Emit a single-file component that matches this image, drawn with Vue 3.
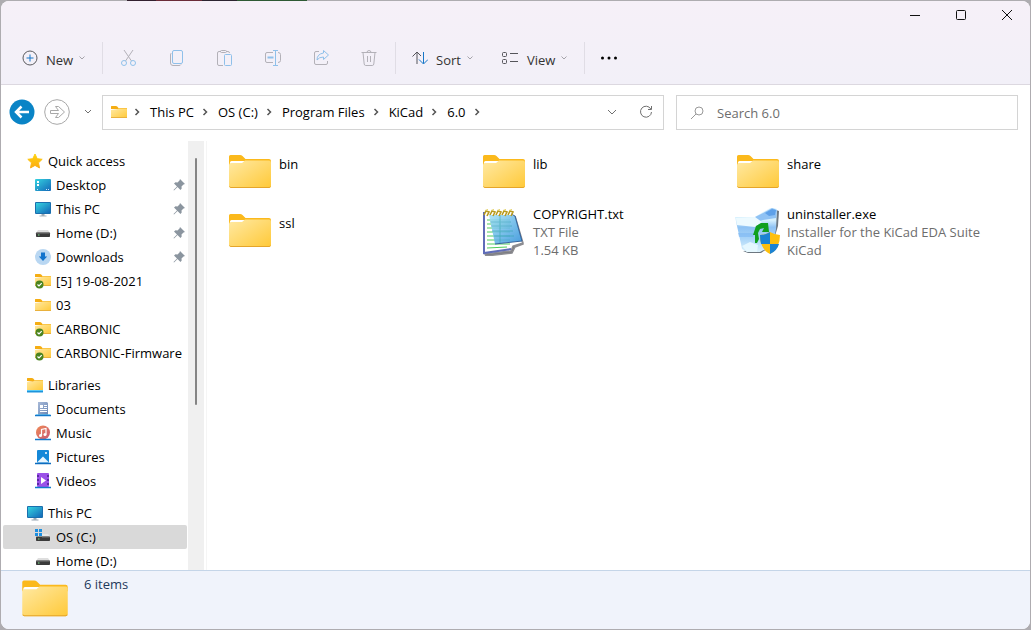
<script setup>
import { ref } from 'vue'

const query = ref('')

const fileActions = [
  { id: 'cut', label: 'Cut' },
  { id: 'copy', label: 'Copy' },
  { id: 'paste', label: 'Paste' },
  { id: 'rename', label: 'Rename' },
  { id: 'share', label: 'Share' },
  { id: 'delete', label: 'Delete' },
]

const crumbs = ['This PC', 'OS (C:)', 'Program Files', 'KiCad', '6.0']

const tree = [
  {
    label: 'Quick access',
    icon: 'star',
    children: [
      { label: 'Desktop', icon: 'desktop', pinned: true },
      { label: 'This PC', icon: 'monitor', pinned: true },
      { label: 'Home (D:)', icon: 'drive', pinned: true },
      { label: 'Downloads', icon: 'downloads', pinned: true },
      { label: '[5] 19-08-2021', icon: 'folder-synced' },
      { label: '03', icon: 'folder-small' },
      { label: 'CARBONIC', icon: 'folder-synced' },
      { label: 'CARBONIC-Firmware', icon: 'folder-synced' },
    ],
  },
  {
    label: 'Libraries',
    icon: 'libraries',
    children: [
      { label: 'Documents', icon: 'documents' },
      { label: 'Music', icon: 'music' },
      { label: 'Pictures', icon: 'pictures' },
      { label: 'Videos', icon: 'videos' },
    ],
  },
  {
    label: 'This PC',
    icon: 'monitor',
    children: [
      { label: 'OS (C:)', icon: 'os-drive', selected: true },
      { label: 'Home (D:)', icon: 'drive' },
    ],
  },
]

const items = [
  { name: 'bin', icon: 'folder', details: [] },
  { name: 'lib', icon: 'folder', details: [] },
  { name: 'share', icon: 'folder', details: [] },
  { name: 'ssl', icon: 'folder', details: [] },
  { name: 'COPYRIGHT.txt', icon: 'notepad', details: ['TXT File', '1.54 KB'] },
  { name: 'uninstaller.exe', icon: 'uninstaller', details: ['Installer for the KiCad EDA Suite', 'KiCad'] },
]
</script>

<template>
  <svg class="sprite" aria-hidden="true">
    <defs>
      <linearGradient id="g-folder" x1="0" y1="0" x2="1" y2="1">
        <stop offset="0" stop-color="#ffe9a3" />
        <stop offset="1" stop-color="#ffc938" />
      </linearGradient>
      <linearGradient id="g-screen" x1="0" y1="0" x2="1" y2="1">
        <stop offset="0" stop-color="#35d3e0" />
        <stop offset="1" stop-color="#1468b8" />
      </linearGradient>
      <linearGradient id="g-star" x1="0" y1="0" x2="0" y2="1">
        <stop offset="0" stop-color="#ffd30f" />
        <stop offset="1" stop-color="#fbab12" />
      </linearGradient>
      <linearGradient id="g-music" x1="0" y1="0" x2="1" y2="1">
        <stop offset="0" stop-color="#f08a55" />
        <stop offset="1" stop-color="#c75a78" />
      </linearGradient>
      <linearGradient id="g-doc" x1="0" y1="0" x2="1" y2="1">
        <stop offset="0" stop-color="#a9bbd9" />
        <stop offset="1" stop-color="#6a86b4" />
      </linearGradient>
      <linearGradient id="g-page" x1="0" y1="0" x2="1" y2="1">
        <stop offset="0" stop-color="#a6e2f8" />
        <stop offset="1" stop-color="#2f8fd8" />
      </linearGradient>
      <linearGradient id="g-bin" x1="0" y1="0" x2="0" y2="1">
        <stop offset="0" stop-color="#e4f6ff" />
        <stop offset="0.3" stop-color="#d4effd" />
        <stop offset="0.45" stop-color="#8ec2f4" />
        <stop offset="0.7" stop-color="#a9d4f8" />
        <stop offset="1" stop-color="#dcf2fc" />
      </linearGradient>
    </defs>

    <symbol id="folder" viewBox="0 1 48 48">
      <path d="M3 17V8.500q0-1.500 1.500-1.500H14q1.500 0 2.500 1l3 3H43q2 0 2 2v4z" fill="#fbb91c" />
      <path d="M4 16v-1.500q0-1.500 1.500-1.500H20l-3 3z" fill="#fff" />
      <path d="M3 17q0-2 2-2h11l3-2.500h24q2 0 2 2V38q0 2-2 2H5q-2 0-2-2z" fill="url(#g-folder)" />
      <path d="M3.500 38.500q.500 1 1.500 1h38q1 0 1.500-1" fill="none" stroke="#e5a52a" />
    </symbol>
    <symbol id="folder-small" viewBox="0 0 16 16">
      <path d="M0 5V2.500Q0 2 .500 2H5q.700 0 1.200.500L7.500 4H15.500q.500 0 .500.500V6z" fill="#f5ad12" />
      <path d="M0 6h5.500L7.500 4.500H15.500q.500 0 .500.500v8.500q0 .500-.500.500H.500q-.500 0-.500-.500z" fill="url(#g-folder)" />
      <path d="M0 13.500h16" stroke="#e9b13d" />
    </symbol>
    <symbol id="folder-synced" viewBox="0 0 16 16">
      <use href="#folder-small" y="-1" width="16" height="16" />
      <circle cx="4.500" cy="11.500" r="4" fill="#4b8420" />
      <path d="M2.500 11.500l1.500 1.500 2.700-2.800" fill="none" stroke="#fff" stroke-width="1.200" />
    </symbol>
    <symbol id="libraries" viewBox="0 0 16 16">
      <path d="M0 4V1.500Q0 1 .500 1H5q.700 0 1.200.500L7.500 3H15.500q.500 0 .500.500V6z" fill="#f5ad12" />
      <path d="M0 5h5.500L7.500 3.500H15.500q.500 0 .500.500v9H0z" fill="url(#g-folder)" />
      <path d="M0 13h16v2q0 .500-.500.500H.500Q0 15.500 0 15z" fill="#1c94dc" />
      <path d="M0 13.500h16" stroke="#59c8f5" />
    </symbol>
    <symbol id="star" viewBox="0 0 16 16">
      <path d="M8 1l2.200 4.700 5 .600-3.700 3.500 1 5.100L8 12.400l-4.500 2.500 1-5.100L.800 6.300l5-.600z" fill="url(#g-star)" stroke="url(#g-star)" stroke-linejoin="round" />
    </symbol>
    <symbol id="desktop" viewBox="0 0 16 16">
      <rect y="2" width="16" height="12" rx="1" fill="url(#g-screen)" />
      <path d="M2 4h2v2H2zM2 7h2v2H2z" fill="#fff" />
      <path d="M2 12.500h1M11 12.500h1M13 12.500h1" stroke="#c9e6fb" />
    </symbol>
    <symbol id="monitor" viewBox="0 0 16 16">
      <path d="M6.500 13h3v2h-3z" fill="#9aa7b2" />
      <path d="M4.500 15h7" stroke="#aab5be" stroke-width="1.200" />
      <rect y="1" width="16" height="12" rx="1" fill="#1a6fae" />
      <rect x="1" y="2" width="14" height="10" fill="url(#g-screen)" />
    </symbol>
    <symbol id="drive" viewBox="0 0 16 16">
      <path d="M3 5h10l2 3H1z" fill="#dedede" />
      <rect x="1" y="7.500" width="14" height="4.500" rx=".800" fill="#3a3a3a" />
      <path d="M1.500 8h13" stroke="#777" />
      <path d="M3 10h1.500" stroke="#7be38a" />
    </symbol>
    <symbol id="os-drive" viewBox="0 0 16 16">
      <path d="M5 5h8l2 3H1l1-2z" fill="#e8e8e8" />
      <rect x="1" y="7.500" width="14" height="4.500" rx=".800" fill="#3a3a3a" />
      <path d="M7 8h7.500" stroke="#777" />
      <path d="M3 10h1.500" stroke="#7be38a" />
      <path d="M0 0h3v3H0zM4 0h3v3H4zM0 4h3v3H0zM4 4h3v3H4z" fill="#1c8fe0" />
    </symbol>
    <symbol id="downloads" viewBox="0 0 16 16">
      <circle cx="8" cy="8" r="8" fill="#b9d7f2" />
      <path d="M6 3.500h4v4h2.200L8 12 3.800 7.500H6z" fill="#1273cc" />
    </symbol>
    <symbol id="documents" viewBox="0 0 16 16">
      <path d="M3 1h9l1 1v12H3z" fill="url(#g-doc)" />
      <path d="M5 4h3v3H5zM9 4h3v1H9zM9 6h3v1H9zM5 8h7v1H5zM5 10h7v1H5z" fill="#fff" />
      <path d="M0 14.500h16" stroke="#1378cc" stroke-width="1.500" />
      <path d="M1 13.500h14" stroke="#52bdf0" stroke-width=".600" />
    </symbol>
    <symbol id="music" viewBox="0 0 16 16">
      <circle cx="8" cy="7.500" r="7" fill="url(#g-music)" />
      <path d="M6.500 10.500V4.500L11 3.500v6" fill="none" stroke="#fff" stroke-width="1.200" />
      <circle cx="5.500" cy="10.500" r="1.500" fill="#fff" />
      <circle cx="10" cy="9.500" r="1.500" fill="#fff" />
      <path d="M0 14.500h16" stroke="#1378cc" stroke-width="1.500" />
    </symbol>
    <symbol id="pictures" viewBox="0 0 16 16">
      <rect x="2" y="1" width="12" height="13" rx="1" fill="#1588d8" />
      <path d="M2 13.500l6-6 6 6z" fill="#e9f6ff" />
      <circle cx="11" cy="4" r="1" fill="#fff" />
      <path d="M0 14.500h16" stroke="#0c6cbf" stroke-width="1.500" />
    </symbol>
    <symbol id="videos" viewBox="0 0 16 16">
      <rect x="2" y="0" width="12" height="14" rx="1" fill="#9b51e8" />
      <path d="M3 2v11M13 2v11" stroke="#4a1b8f" stroke-width="1.500" stroke-dasharray="2 2" />
      <path d="M6 4l5 3.500L6 11z" fill="#fff" />
      <path d="M0 14.500h16" stroke="#1378cc" stroke-width="1.500" />
    </symbol>
    <symbol id="pin" viewBox="0 0 12 12">
      <path d="M7 0l5 5-1.500.500-2 2 .200 2L7.500 11 4.500 8 1 11.500.500 11 4 7.500 1 4.500 2.500 3.300l2 .200 2-2z" fill="#8b959f" />
    </symbol>
    <symbol id="notepad" viewBox="0 0 48 48">
      <path d="M5 46l26-3 2-5 10-3-8-27 8 28-8 3-3 6-26 3z" fill="#77777c" stroke="#8d8d92" stroke-width="1.500" />
      <path d="M4 4h27v37L5 45z" fill="#fff" />
      <path d="M7 12h23M7 16h23M7 20h23M7 24h23M7 28h23M7 32h23M7 36h23M7 40l20-1" stroke="#4fce5c" stroke-width="1.200" />
      <path d="M4 4v41l27-4" fill="none" stroke="#5f6cb8" stroke-width="2" />
      <path d="M9 7h22l4 1 7 25-27 3z" fill="url(#g-page)" opacity=".88" />
      <path d="M31 6l4 2 7 25-27 3" fill="none" stroke="#36649e" stroke-width="1" />
      <path d="M10 14h21M11 18h21M12 23h21M14 28h20M20 7v28" stroke="#1f9c9c" opacity=".45" />
      <path d="M4 7l2-4 3 1-2 4M10 7l2-4 3 1-2 4M16 7l2-4 3 1-2 4M22 7l2-4 3 1-2 4M28 7l2-4 3 1-2 4" fill="none" stroke="#b99b22" stroke-width="1.600" />
      <path d="M5 2.500l3-1M11 2.500l3-1M17 2.500l3-1M23 2.500l3-1M29 2.500l3-1" stroke="#e2cf62" />
    </symbol>
    <symbol id="uninstaller" viewBox="0 0 48 48">
      <path d="M42 2l3 1-1 15-3 10-4-4z" fill="#6d7780" />
      <path d="M9 43l5 2h13l6-4z" fill="#6d7780" />
      <path d="M1 9l20 0 8-5 9-5 5 2-1 20-3 16-13 7H13l-5-3-1-5z" fill="url(#g-bin)" />
      <path d="M21 9l8-4 9-5 5 2-1 8-13 2-6 2z" fill="#8fc2f4" />
      <path d="M31 5l7-4 4 1-1 5-6 1z" fill="#5ea0e8" />
      <path d="M2 10l19-1 7 5-7 5-18-2z" fill="#edfaff" />
      <path d="M4 25h16l-1 4H5z" fill="#7db8f4" opacity=".6" />
      <path d="M8 38l8-4 8 3-1 7H13z" fill="#e8f8ff" opacity=".9" />
      <path d="M21 35v-8h-2l3-9 5-3 7 0 1 9-7 0 2-4-4 1-2 4 1 6-2 4z" fill="#10a01f" />
      <path d="M36 24q5 3 10 3 0 14-10 19-10-5-10-19 5 0 10-3z" fill="#fdbf0e" />
      <path d="M36 24v12H27q-1-4-1-9 5 0 10-3z" fill="#1b83d4" />
      <path d="M36 36h9q-2 7-9 10z" fill="#1b83d4" />
    </symbol>
    <symbol id="cut" viewBox="0 0 18 18">
      <path d="M4 1l7.500 11M13 1L5.500 12" stroke="#b3b1b8" />
      <circle cx="4" cy="14" r="2.500" fill="none" stroke="#8fc0ea" />
      <circle cx="13" cy="14" r="2.500" fill="none" stroke="#8fc0ea" />
    </symbol>
    <symbol id="copy" viewBox="0 0 18 18">
      <path d="M3.500 4Q2.500 4.500 2.500 6v8q0 2.500 2.500 2.500h6q1.500 0 2-1" fill="none" stroke="#b3b1b8" />
      <rect x="4.500" y="1.500" width="10" height="13" rx="1.500" fill="none" stroke="#8fc0ea" />
    </symbol>
    <symbol id="paste" viewBox="0 0 18 18">
      <path d="M5 2.500H3Q1.500 2.500 1.500 4v11q0 1.500 1.500 1.500h4M10 2.500h2q1.500 0 1.500 1.500" fill="none" stroke="#b3b1b8" />
      <rect x="4.500" y="1.500" width="6" height="2" rx="1" fill="none" stroke="#b3b1b8" />
      <rect x="8.500" y="5.500" width="7" height="11" rx="1" fill="none" stroke="#8fc0ea" />
    </symbol>
    <symbol id="rename" viewBox="0 0 18 18">
      <path d="M9 3.500H3Q1.500 3.500 1.500 5v7q0 1.500 1.500 1.500h6M14 3.500q2.500 0 2.500 2v6q0 2-2.500 2" fill="none" stroke="#b3b1b8" />
      <path d="M9 1.500h5M11.500 1.500v15M9 16.500h5" fill="none" stroke="#8fc0ea" />
      <path d="M3.500 8.500h6" stroke="#8fc0ea" stroke-width="2" />
    </symbol>
    <symbol id="share" viewBox="0 0 18 18">
      <path d="M7 2.500H4Q2.500 2.500 2.500 4v10q0 1.500 1.500 1.500h10q1.500 0 1.500-1.500v-2" fill="none" stroke="#b3b1b8" />
      <path d="M11.500 1.500l5 4.500-5 4.500V8Q7 8 5 11q0-6 6.500-7z" fill="none" stroke="#8fc0ea" stroke-linejoin="round" />
    </symbol>
    <symbol id="delete" viewBox="0 0 18 18">
      <path d="M1.500 3.500h15M7 3.500q0-2 2-2t2 2M3 3.500l1.200 11.500q.200 1.500 1.500 1.500h6.600q1.300 0 1.500-1.500L15 3.500M7.500 7v6M10.500 7v6" fill="none" stroke="#b3b1b8" />
    </symbol>
  </svg>

  <div class="backdrop">
    <div class="window">
      <header class="chrome">
        <div class="caption">
          <button type="button" aria-label="Minimize">
            <svg width="12" height="12" viewBox="0 0 12 12"><path d="M1 6.500h10" /></svg>
          </button>
          <button type="button" aria-label="Maximize">
            <svg width="12" height="12" viewBox="0 0 12 12"><rect x="1.500" y="1.500" width="9" height="9" rx="1" /></svg>
          </button>
          <button type="button" aria-label="Close">
            <svg width="12" height="12" viewBox="0 0 12 12"><path d="M1 1l10 10M11 1L1 11" /></svg>
          </button>
        </div>

        <div class="toolbar" role="toolbar" aria-label="Commands">
          <button type="button" class="command new">
            <svg width="16" height="16" viewBox="0 0 16 16" fill="none">
              <circle cx="8" cy="8" r="7" stroke="#5a5a5e" />
              <path d="M8 4.500v7M4.500 8h7" stroke="#1676c8" />
            </svg>
            <span>New</span>
            <svg class="caret" width="6" height="4" viewBox="0 0 6 4"><path d="M.500.500L3 3 5.500.500" /></svg>
          </button>
          <span class="rule"></span>
          <div class="actions">
            <button v-for="a in fileActions" :key="a.id" type="button" disabled :aria-label="a.label">
              <svg width="18" height="18"><use :href="'#' + a.id" /></svg>
            </button>
          </div>
          <span class="rule"></span>
          <button type="button" class="command sort">
            <svg width="16" height="14" viewBox="0 0 16 14" fill="none">
              <path d="M5 13V1.500M.500 5.500L5 1l4 4" stroke="#55555a" />
              <path d="M11.500 1v11.500M7 8.500l4.500 4.500L16 8.500" stroke="#1676c8" />
            </svg>
            <span>Sort</span>
            <svg class="caret" width="6" height="4" viewBox="0 0 6 4"><path d="M.500.500L3 3 5.500.500" /></svg>
          </button>
          <button type="button" class="command view">
            <svg width="18" height="14" viewBox="0 0 18 14" fill="none" stroke="#55555a">
              <rect x="1.500" y="1.500" width="4" height="4" rx="1" />
              <rect x="1.500" y="8.500" width="4" height="4" rx="1" />
              <path d="M9 2.500h8M9 10.500h8" />
            </svg>
            <span>View</span>
            <svg class="caret" width="6" height="4" viewBox="0 0 6 4"><path d="M.500.500L3 3 5.500.500" /></svg>
          </button>
          <span class="rule"></span>
          <button type="button" class="more" aria-label="See more">
            <svg width="18" height="4" viewBox="0 0 18 4"><circle cx="2.500" cy="2" r="1.500" /><circle cx="9" cy="2" r="1.500" /><circle cx="15.500" cy="2" r="1.500" /></svg>
          </button>
        </div>
      </header>

      <div class="navbar">
        <button type="button" class="round" aria-label="Back">
          <svg width="26" height="26" viewBox="0 0 26 26" fill="none">
            <circle cx="13" cy="13" r="12.500" fill="#0a84c6" />
            <path d="M20 13H8M12.500 7.500L7 13l5.500 5.500" stroke="#fff" stroke-width="2.500" />
          </svg>
        </button>
        <button type="button" class="round" aria-label="Forward" disabled>
          <svg width="26" height="26" viewBox="0 0 26 26" fill="none" stroke="#a8a8a8">
            <circle cx="13" cy="13" r="12.300" />
            <path d="M6.500 11.500h8l-3-4h3l6 5.500-6 5.500h-3l3-4h-8z" />
          </svg>
        </button>
        <button type="button" class="recent" aria-label="Recent locations">
          <svg width="8" height="6" viewBox="0 0 8 6"><path d="M1 1l3 3 3-3" /></svg>
        </button>

        <nav class="address" aria-label="Address">
          <svg width="16" height="16"><use href="#folder-small" /></svg>
          <ol>
            <li class="sep"><svg width="6" height="8" viewBox="0 0 6 8"><path d="M1.500 1l3 3-3 3" /></svg></li>
            <li v-for="c in crumbs" :key="c">
              <a href="#">{{ c }}</a>
              <svg width="6" height="8" viewBox="0 0 6 8"><path d="M1.500 1l3 3-3 3" /></svg>
            </li>
          </ol>
          <button type="button" aria-label="Previous locations">
            <svg width="10" height="6" viewBox="0 0 10 6"><path d="M1 1l4 4 4-4" /></svg>
          </button>
          <button type="button" aria-label="Refresh">
            <svg width="14" height="14" viewBox="0 0 14 14"><path d="M11.800 4A5.500 5.500 0 1 0 12.500 7M12.500 1v3.500H9" /></svg>
          </button>
        </nav>

        <label class="search">
          <svg width="14" height="14" viewBox="0 0 14 14"><circle cx="9" cy="5" r="4" /><path d="M6 8L1 13" /></svg>
          <input v-model="query" type="text" aria-label="Search 6.0" placeholder="Search 6.0" />
        </label>
      </div>

      <div class="body">
        <nav class="tree" aria-label="Folders">
          <ul v-for="group in tree" :key="group.label">
            <li>
              <a href="#" class="node root">
                <svg width="16" height="16"><use :href="'#' + group.icon" /></svg>
                <span>{{ group.label }}</span>
              </a>
            </li>
            <li v-for="n in group.children" :key="n.label">
              <a href="#" class="node" :class="{ selected: n.selected }">
                <svg width="16" height="16"><use :href="'#' + n.icon" /></svg>
                <span>{{ n.label }}</span>
                <svg v-if="n.pinned" class="pin" width="12" height="12"><use href="#pin" /></svg>
              </a>
            </li>
          </ul>
        </nav>
        <div class="scrollbar"><div class="thumb"></div></div>
        <main class="files">
          <a v-for="f in items" :key="f.name" href="#" class="file" :class="{ plain: !f.details.length }">
            <svg width="48" height="48"><use :href="'#' + f.icon" /></svg>
            <span class="text">
              <span class="name">{{ f.name }}</span>
              <span v-for="d in f.details" :key="d" class="detail">{{ d }}</span>
            </span>
          </a>
        </main>
      </div>

      <footer class="status">
        <svg width="52" height="52" viewBox="0 0 48 48"><use href="#folder" /></svg>
        <span>{{ items.length }} items</span>
      </footer>
    </div>
  </div>
</template>

<style>
body {
  margin: 0;
}
</style>

<style scoped>
.sprite {
  position: absolute;
  width: 0;
  height: 0;
}

.backdrop {
  box-sizing: border-box;
  height: 100vh;
  padding: 1px;
  background:
    linear-gradient(90deg, transparent 127px, #33202f 127px 156px, #6b2b38 156px 202px, #2c2430 202px 237px, #2e5a34 237px 307px, transparent 307px) 0 0 / 100% 1px no-repeat,
    #aeacb0;
  font-family: "Open Sans", "Noto Sans", sans-serif;
  font-size: 13px;
  line-height: 18px;
  color: #000;
}

.window {
  display: flex;
  flex-direction: column;
  height: 100%;
  overflow: hidden;
  border-radius: 8px;
  background: #fff;
}

button {
  display: inline-flex;
  align-items: center;
  justify-content: center;
  box-sizing: border-box;
  padding: 0;
  border: 0;
  background: none;
  font: inherit;
  color: inherit;
}

a {
  color: inherit;
  text-decoration: none;
}

ul,
ol {
  margin: 0;
  padding: 0;
  list-style: none;
}

svg {
  flex: none;
}

.chrome {
  border-bottom: 1px solid #dcd8e0;
  background: linear-gradient(#f6f0f8, #f2f0f8);
}

.caption {
  display: flex;
  justify-content: flex-end;
}

.caption button {
  width: 46px;
  height: 28px;
}

.caption svg {
  fill: none;
  stroke: #111;
}

.toolbar {
  display: flex;
  align-items: center;
  box-sizing: border-box;
  height: 55px;
  padding: 3px 0 0 21px;
}

.command {
  justify-content: flex-start;
  gap: 8px;
  height: 32px;
  color: #333;
}

.command span {
  padding-top: 3px;
}

.caret {
  margin-left: -2px;
  fill: none;
  stroke: #a5a3aa;
}

.rule {
  width: 1px;
  height: 32px;
  background: #e0dde5;
}

.new {
  width: 80px;
}

.actions {
  display: flex;
  gap: 12px;
  padding: 0 8px;
}

.actions button {
  width: 36px;
  height: 32px;
}

.sort {
  width: 78px;
  padding-left: 16px;
}

.view {
  width: 110px;
  padding-left: 27px;
}

.more {
  width: 48px;
  height: 32px;
}

.navbar {
  display: flex;
  align-items: center;
  padding: 10px 12px 11px 8px;
}

.round {
  width: 26px;
  height: 26px;
  margin: 0 9px 2px 0;
}

.recent {
  width: 18px;
  margin: 0 5px 2px 0;
}

.recent svg,
.address ol svg,
.address button svg,
.search svg {
  fill: none;
  stroke: #707070;
}

.address,
.search {
  display: flex;
  align-items: center;
  box-sizing: border-box;
  height: 35px;
  border: 1px solid #d4d4d4;
}

.address {
  flex: 562 1 562px;
  min-width: 0;
  margin-right: 12px;
  padding: 0 8px 1px;
}

.address ol {
  display: flex;
  flex: 1;
  padding-left: 7px;
}

.address li {
  display: flex;
  align-items: center;
}

.address li a {
  padding: 0 8px 0 10px;
}

.address ol path {
  stroke: #555;
  stroke-width: 1.5;
}

.address button {
  width: 18px;
  height: 24px;
}

.address button + button {
  margin-left: 16px;
}

.search {
  flex: 342 1 342px;
  min-width: 0;
  gap: 13px;
  padding-left: 13px;
}

.search svg {
  stroke: #999;
}

.search input {
  flex: 1;
  min-width: 0;
  padding: 0;
  border: 0;
  outline: 0;
  background: none;
  font: inherit;
}

.search input::placeholder {
  color: #6d6d6d;
  opacity: 1;
}

.body {
  display: flex;
  flex: 1;
  min-height: 0;
}

.tree {
  box-sizing: border-box;
  width: 187px;
  padding: 8px 1px 0 2px;
  overflow: hidden;
}

.tree ul {
  margin-bottom: 8px;
}

.node {
  display: flex;
  align-items: center;
  gap: 5px;
  height: 24px;
  padding: 0 2px 0 32px;
  border-radius: 2px;
  white-space: nowrap;
}

.node.root {
  padding-left: 24px;
}

.node.selected {
  background: #d9d9d9;
}

.pin {
  margin-left: auto;
}

.scrollbar {
  box-sizing: border-box;
  width: 16px;
  margin-right: 2px;
  padding: 17px 7px 0;
  background: #f0f0f0;
}

.thumb {
  height: 60%;
  border-radius: 1px;
  background: #858585;
}

.files {
  display: grid;
  flex: 1;
  grid-template-columns: repeat(auto-fill, 254px);
  grid-auto-rows: min-content;
  gap: 5px 0;
  padding: 5px 0 0 19px;
  border-left: 1px solid #f5f5f5;
}

.file {
  display: flex;
  align-items: center;
  gap: 5px;
  min-height: 54px;
}

.text {
  display: flex;
  flex-direction: column;
  align-self: flex-start;
}

.plain .text {
  padding-top: 9px;
}

.name,
.detail {
  white-space: nowrap;
}

.detail {
  color: #6d6d6d;
}

.status {
  display: flex;
  align-items: flex-start;
  gap: 13px;
  box-sizing: border-box;
  height: 59px;
  padding: 3px 18px 0;
  border-top: 1px solid #c5d5e8;
  background: #f0f3fb;
  color: #1e395b;
}

.status span {
  padding-top: 1px;
}
</style>
